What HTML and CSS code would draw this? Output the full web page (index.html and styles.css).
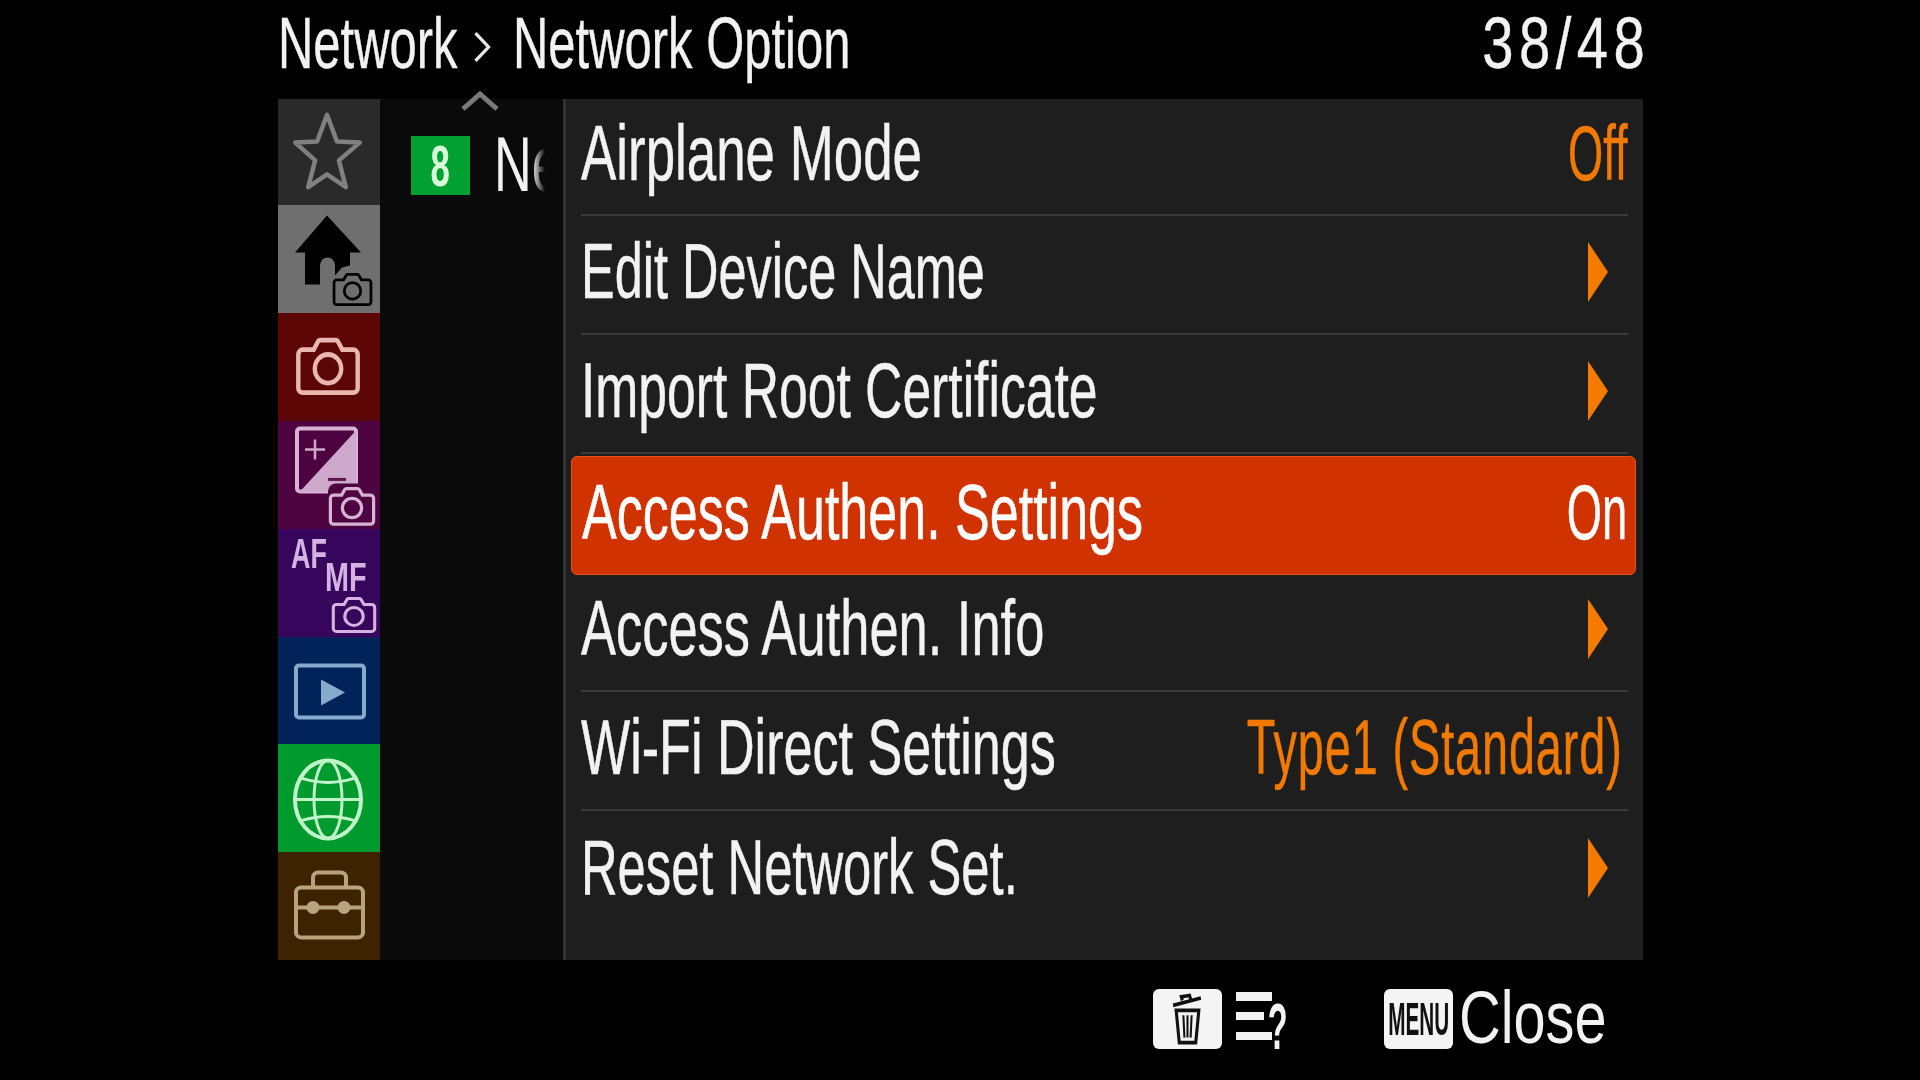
FILE: index.html
```html
<!DOCTYPE html>
<html lang="en">
<head>
<meta charset="utf-8">
<title>Network Option</title>
<link rel="stylesheet" href="styles.css">
</head>
<body>
<svg class="defs" width="0" height="0" aria-hidden="true">
  <symbol id="cam" viewBox="0 0 60 52" preserveAspectRatio="none">
    <path d="M7 12h10l4-7a3 3 0 0 1 2-1h14a3 3 0 0 1 2 1l4 7h10a4 4 0 0 1 4 4v28a4 4 0 0 1-4 4H7a4 4 0 0 1-4-4V16a4 4 0 0 1 4-4z" fill="none" stroke="currentColor" stroke-width="4"/>
    <circle cx="30" cy="28" r="12" fill="none" stroke="currentColor" stroke-width="4"/>
  </symbol>
</svg>
<main class="screen">
  <header class="top">
    <div class="crumbs">
      <span class="title first-crumb">Network</span>
      <svg class="sep" viewBox="0 0 22 40"><path d="M3 3l16 17L3 37" fill="none" stroke="#e8e8e8" stroke-width="4"/></svg>
      <span class="title">Network Option</span>
    </div>
    <div class="count">38/48</div>
  </header>

  <section class="panel">
    <svg class="caret" viewBox="0 0 38 20"><path d="M2 18L19 3l17 15" fill="none" stroke="#7a7a7a" stroke-width="5"/></svg>
    <nav class="tabs">
      <div class="tab t-fav">
        <svg viewBox="0 0 102 107"><path d="M49 16L59 43L82 44L61 62L68 89L49 76L30 89L37 62L17 44L39 43z" fill="none" stroke="#808080" stroke-width="4.5" stroke-linejoin="round"/></svg>
      </div>
      <div class="tab t-home">
        <svg viewBox="0 0 102 107">
          <path d="M49 10L83 47H72V60L64 62L57 70V60a7.500 8 0 0 0-15 0V79H27V47H17z" fill="#000"/>
          <use href="#cam" x="54" y="66" width="41" height="36" color="#000"/>
        </svg>
      </div>
      <div class="tab t-cam">
        <svg viewBox="0 0 102 107"><use href="#cam" x="17" y="22" width="66" height="62" color="#ecb6b0"/></svg>
      </div>
      <div class="tab t-exp">
        <svg viewBox="0 0 102 107">
          <path d="M22 7h53a3 3 0 0 1 3 3v57a3 3 0 0 1-3 3H22a3 3 0 0 1-3-3V10a3 3 0 0 1 3-3z" fill="none" stroke="#d8b4d4" stroke-width="4"/>
          <path d="M78 9v61H22z" fill="#cfa9cb"/>
          <path d="M37 18v20M27 28h20" stroke="#cfa9cb" stroke-width="2.500"/>
          <path d="M50 58h18" stroke="#5d184f" stroke-width="3"/>
          <rect x="50" y="62" width="50" height="44" rx="8" fill="#4d0440"/>
          <use href="#cam" x="50" y="64" width="48" height="42" color="#d8b4d4"/>
        </svg>
      </div>
      <div class="tab t-af">
        <span class="af">AF</span>
        <span class="mf">MF</span>
        <svg viewBox="0 0 102 107"><use href="#cam" x="53" y="66" width="46" height="39" color="#d4b3e2"/></svg>
      </div>
      <div class="tab t-play">
        <svg viewBox="0 0 102 107">
          <rect x="18" y="28" width="68" height="52" rx="3" fill="none" stroke="#86aacb" stroke-width="4"/>
          <path d="M43 42l24 13-24 13z" fill="#86aacb"/>
        </svg>
      </div>
      <div class="tab t-net">
        <svg viewBox="0 0 102 107" fill="none" stroke="#bff5c8">
          <ellipse cx="50" cy="55" rx="33" ry="39" stroke-width="4"/>
          <ellipse cx="50" cy="55" rx="14" ry="39" stroke-width="3"/>
          <path d="M17 55h66" stroke-width="3"/>
          <path d="M24 34q26 8 52 0M24 76q26-8 52 0" stroke-width="3"/>
        </svg>
      </div>
      <div class="tab t-tool">
        <svg viewBox="0 0 102 107" fill="none" stroke="#b9a37d">
          <rect x="18" y="35" width="67" height="50" rx="5" stroke-width="4"/>
          <path d="M35 35V25a5 5 0 0 1 5-5h23a5 5 0 0 1 5 5v10" stroke-width="4"/>
          <path d="M18 55h67" stroke-width="4"/>
          <circle cx="35" cy="55" r="6.500" fill="#b9a37d" stroke="none"/>
          <circle cx="66" cy="55" r="6.500" fill="#b9a37d" stroke="none"/>
        </svg>
      </div>
    </nav>

    <aside class="side">
      <span class="badge"><span class="badge-num">8</span></span>
      <div class="clip"><span class="label">Network Option</span></div>
    </aside>

    <div class="list">
      <div class="row first"><span class="label s1">Airplane Mode</span><span class="val">Off</span></div>
      <div class="row"><span class="label s2">Edit Device Name</span><svg class="arrow" viewBox="0 0 20 60"><path d="M0 0l20 30L0 60z" fill="#f57a00"/></svg></div>
      <div class="row"><span class="label s3">Import Root Certificate</span><svg class="arrow" viewBox="0 0 20 60"><path d="M0 0l20 30L0 60z" fill="#f57a00"/></svg></div>
      <div class="row selected"><span class="label s4">Access Authen. Settings</span><span class="val">On</span></div>
      <div class="row"><span class="label s5">Access Authen. Info</span><svg class="arrow" viewBox="0 0 20 60"><path d="M0 0l20 30L0 60z" fill="#f57a00"/></svg></div>
      <div class="row"><span class="label s6">Wi-Fi Direct Settings</span><span class="val wide">Type1 (Standard)</span></div>
      <div class="row last"><span class="label s7">Reset Network Set.</span><svg class="arrow" viewBox="0 0 20 60"><path d="M0 0l20 30L0 60z" fill="#f57a00"/></svg></div>
    </div>
  </section>

  <footer class="bottom">
    <span class="key trash-key">
      <svg class="trash" viewBox="0 0 32 42" preserveAspectRatio="none" fill="none" stroke="#111">
        <path d="M2 10L29 4M11 6l-1-3 8-1 1 3" stroke-width="3"/>
        <path d="M5 14h22l-3 26H8z" stroke-width="3"/>
        <path d="M12 18l1 18M16 18v18M20 18l-1 18" stroke-width="2"/>
      </svg>
    </span>
    <span class="help">
      <svg viewBox="0 0 52 62"><path d="M0 3h36v9H0zM0 23h28v8H0zM0 43h36v8H0z" fill="#f2f2f2"/></svg>
      <span class="q">?</span>
    </span>
    <span class="key menu"><span class="menu-text">MENU</span></span>
    <span class="close">Close</span>
  </footer>
</main>
</body>
</html>
```
FILE: styles.css
```css
* { box-sizing: border-box; }
html, body { margin: 0; height: 100%; background: #000; }
body { font-family: "Liberation Sans", sans-serif; color: #f2f2f2; overflow: hidden; }
.defs { display: block; height: 0; }
.screen { width: 1365px; margin-left: 278px; height: 1080px; display: flex; flex-direction: column; filter: blur(.6px); }

.top { height: 99px; display: flex; justify-content: space-between; align-items: center; padding-bottom: 14px; font-size: 72px; -webkit-text-stroke: .4px #f2f2f2; }
.crumbs { display: flex; align-items: center; min-width: 0; }
.title { display: inline-block; white-space: nowrap; transform: scaleX(.68); transform-origin: left center; }
.first-crumb { width: 195px; flex: none; }
.sep { width: 18px; height: 38px; margin: 8px 22px 0 0; flex: none; }
.count { letter-spacing: 7px; margin-right: -7px; transform: scaleX(.78); transform-origin: right center; }

.panel { position: relative; height: 861px; display: flex; background: #0a0a0a; }
.caret { position: absolute; left: 183px; top: -8px; width: 38px; height: 20px; }

.tabs { width: 102px; flex: none; display: grid; grid-template-rows: 106px 108px repeat(6, 1fr); }
.tab { position: relative; }
.tab svg { display: block; width: 100%; height: 100%; }
.t-fav { background: #2a2a2a; }
.t-home { background: #6f6f6f; }
.t-cam { background: #5c0606; }
.t-exp { background: #4d0440; }
.t-af { background: #37065c; }
.t-play { background: #01235a; }
.t-net { background: #009a2e; }
.t-tool { background: #3d2300; }
.af, .mf { position: absolute; font-weight: 700; color: #d4b3e2; line-height: 1; transform-origin: left center; }
.af { left: 13px; top: 4px; font-size: 42px; transform: scaleX(.64); }
.mf { left: 47px; top: 28px; font-size: 40px; transform: scaleX(.72); }

.side { width: 186px; flex: none; display: flex; align-items: flex-start; padding: 37px 0 0 31px; gap: 24px; border-right: 3px solid #333; }
.badge { width: 59px; height: 59px; flex: none; background: #00a032; display: flex; align-items: center; justify-content: center; }
.badge-num { color: #d9ffd9; font-size: 58px; line-height: 59px; font-weight: 700; transform: scaleX(.6); }
.clip { width: 51px; height: 70px; overflow: hidden; font-size: 78px; line-height: 56px; -webkit-mask-image: linear-gradient(to right, #000 75%, transparent); mask-image: linear-gradient(to right, #000 75%, transparent); }

.list { flex: 1; min-width: 0; background: #1e1e1e; padding: 0 15px 31px; display: flex; flex-direction: column; }
.row { height: 119px; flex: none; display: flex; align-items: center; padding-bottom: 6px; font-size: 78px; border-bottom: 2px solid #3a3a3a; color: #f2f2f2; -webkit-text-stroke: .5px currentColor; }
.label { display: inline-block; white-space: nowrap; transform: scaleX(.67); transform-origin: left center; }
.row .label { flex: 1; min-width: 0; }
.row .s1 { transform: scaleX(.678); }
.row .s2 { transform: scaleX(.647); }
.row .s3 { transform: scaleX(.662); }
.row .s4 { transform: scaleX(.667); }
.row .s5 { transform: scaleX(.672); }
.row .s6 { transform: scaleX(.668); }
.row .s7 { transform: scaleX(.65); }
.row.first { height: 117px; }
.row.last { border-bottom: 0; }
.row.selected { height: 119px; margin: 2px -8px -2px -10px; padding: 0 8px 6px 10px; background: #d03200; border: 1px solid #e8540f; border-radius: 6px; color: #fff; }
.row.selected .val { color: #fff; }
.val { flex: none; white-space: nowrap; color: #f27a00; transform: scaleX(.58); transform-origin: right center; }
.wide { letter-spacing: 1.500px; transform: scaleX(.6); margin-right: 5px; }
.arrow { flex: none; width: 20px; height: 60px; margin-right: 20px; }

.bottom { flex: 1; display: flex; align-items: flex-start; padding-top: 29px; }
.key { width: 69px; height: 60px; background: #f4f4f4; border-radius: 6px; display: flex; align-items: center; justify-content: center; flex: none; }
.trash-key { margin-left: 875px; }
.trash { width: 33px; height: 52px; }
.help { position: relative; width: 52px; height: 62px; margin-left: 14px; flex: none; }
.help svg { display: block; width: 100%; height: 100%; }
.q { position: absolute; right: 0; top: 5px; font-size: 65px; line-height: 1; font-weight: 700; color: #f2f2f2; transform: scaleX(.5); transform-origin: right center; }
.menu { margin-left: 96px; }
.menu-text { flex: none; color: #111; font-size: 46px; font-weight: 700; line-height: 60px; transform: scaleX(.45); }
.close { font-size: 74px; line-height: 58px; margin-left: 6px; transform: scaleX(.78); transform-origin: left center; }
```
